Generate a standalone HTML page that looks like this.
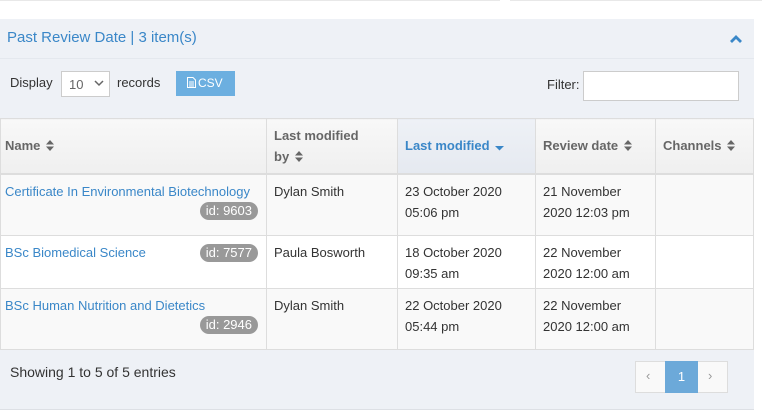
<!DOCTYPE html>
<html><head><style>
*{box-sizing:border-box;margin:0;padding:0}
body{width:762px;height:420px;background:#fff;font-family:"Liberation Sans",Arial,sans-serif;font-size:13px;color:#333;position:relative;overflow:hidden}
.a{position:absolute}
.panel{left:0;top:19px;width:754px;height:391px;background:#eef1f6;border-bottom:1px solid #dde0e5}
.blue{color:#3a87c8}
table{position:absolute;left:0;top:118px;width:753px;border-collapse:collapse;table-layout:fixed}
td,th{border:1px solid #ddd;vertical-align:top;padding:0 6px;line-height:21px;text-align:left}
th{height:55px;vertical-align:middle;font-weight:bold;color:#666;background:linear-gradient(#f8f8f8,#efefef);border-bottom:2px solid #ddd;line-height:21px;padding:0 7px}
th:first-child,td:first-child{padding-left:4px}
th.s{background:linear-gradient(#eef1f6,#e5e9f0);color:#3a87c8}
td{background:#f9f9f9;padding-top:6px;padding-left:7px}
tr.w td{background:#fff}
td a{color:#3a87c8;text-decoration:none}
.id{float:right;background:#999;color:#fff;border-radius:9px;padding:0 6px;line-height:18px;font-size:13px;margin-right:2px}
.ud{display:inline-block;vertical-align:-1px;margin-left:2px}
</style></head><body>
<div class="a" style="left:0;top:0;width:500px;height:1px;background:#e8e8e8"></div>
<div class="a" style="left:510px;top:0;width:252px;height:1px;background:#e8e8e8"></div>
<div class="a panel"></div>
<div class="a" style="left:0;top:58px;width:754px;height:1px;background:#e4e8ee"></div>
<div class="a blue" style="left:7px;top:29px;font-size:15px">Past Review Date | 3 item(s)</div>
<svg class="a" style="left:729px;top:34px" width="14" height="10" viewBox="0 0 14 10"><path d="M2 8 L7 3 L12 8" stroke="#3a87c8" stroke-width="2.8" fill="none"/></svg>
<div class="a" style="left:10px;top:75px">Display</div>
<div class="a" style="left:61px;top:71px;width:49px;height:26px;border:1px solid #ccc;background:#fff;color:#666;padding:5px 0 0 7px">10</div>
<svg class="a" style="left:94px;top:80px" width="10" height="7"><path d="M1 1 L5 5 L9 1" stroke="#666" stroke-width="1.5" fill="none"/></svg>
<div class="a" style="left:117px;top:75px">records</div>
<div class="a" style="left:176px;top:71px;width:59px;height:25px;background:#6cafe0;color:#fff;padding:5px 0 0 11px;font-size:12px"><svg width="9" height="11" style="vertical-align:-1px;margin-right:2px"><path d="M0.5 0.5H6L8.5 3V10.5H0.5Z M2 5H7 M2 7H7 M2 9H7" stroke="#fff" fill="none"/></svg>CSV</div>
<div class="a" style="left:547px;top:77px">Filter:</div>
<div class="a" style="left:583px;top:71px;width:156px;height:30px;background:#fff;border:1px solid #ccc"></div>
<table>
<colgroup><col style="width:266px"><col style="width:131px"><col style="width:138px"><col style="width:120px"><col style="width:98px"></colgroup>
<tr><th>Name <svg class="ud" width="8" height="11"><path d="M0 4.5L4 0L8 4.5Z M0 6.5L4 11L8 6.5Z" fill="#666"/></svg></th><th>Last modified<br>by <svg class="ud" width="8" height="11"><path d="M0 4.5L4 0L8 4.5Z M0 6.5L4 11L8 6.5Z" fill="#666"/></svg></th><th class="s">Last modified <svg class="ud" width="9" height="6" style="vertical-align:-1px"><path d="M0 1L4.5 5.5L9 1Z" fill="#3a87c8"/></svg></th><th>Review date <svg class="ud" width="8" height="11"><path d="M0 4.5L4 0L8 4.5Z M0 6.5L4 11L8 6.5Z" fill="#666"/></svg></th><th>Channels <svg class="ud" width="8" height="11"><path d="M0 4.5L4 0L8 4.5Z M0 6.5L4 11L8 6.5Z" fill="#666"/></svg></th></tr>
<tr style="height:62px"><td><a>Certificate In Environmental Biotechnology</a><br><span class="id">id: 9603</span></td><td>Dylan Smith</td><td>23 October 2020<br>05:06 pm</td><td>21 November<br>2020 12:03 pm</td><td></td></tr>
<tr class="w" style="height:53px"><td><a>BSc Biomedical Science</a><span class="id" style="margin-top:2px">id: 7577</span></td><td>Paula Bosworth</td><td>18 October 2020<br>09:35 am</td><td>22 November<br>2020 12:00 am</td><td></td></tr>
<tr style="height:61px"><td><a>BSc Human Nutrition and Dietetics</a><br><span class="id">id: 2946</span></td><td>Dylan Smith</td><td>22 October 2020<br>05:44 pm</td><td>22 November<br>2020 12:00 am</td><td></td></tr>
</table>
<div class="a" style="left:10px;top:364px;font-size:14px">Showing 1 to 5 of 5 entries</div>
<div class="a" style="left:635px;top:361px;width:93px;height:32px;border:1px solid #ddd;background:#f9f9f9"></div>
<div class="a" style="left:646px;top:368px;color:#999">&#8249;</div>
<div class="a" style="left:665px;top:361px;width:33px;height:32px;background:#6ca9d9;color:#fff;text-align:center;line-height:32px">1</div>
<div class="a" style="left:708px;top:368px;color:#999">&#8250;</div>
</body></html>
